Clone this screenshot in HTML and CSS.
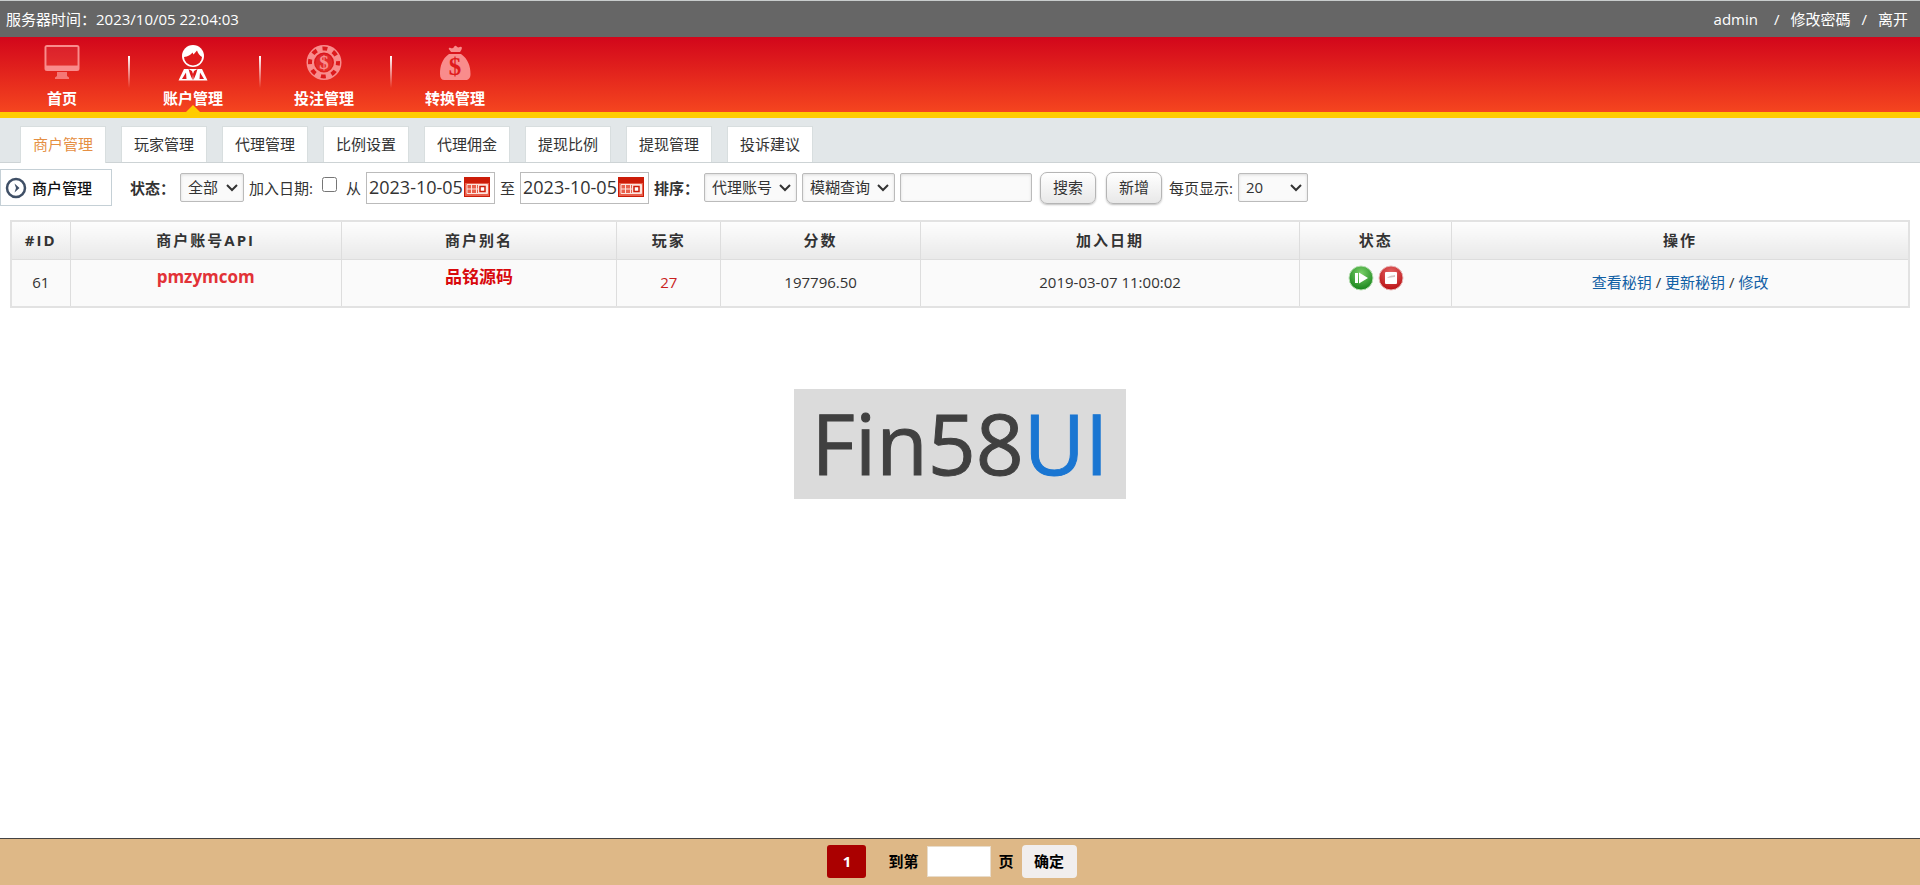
FILE: index.html
```html
<!DOCTYPE html>
<html lang="zh-CN">
<head>
  <meta charset="UTF-8">
  <meta name="viewport" content="width=device-width, initial-scale=1.0">
  <title>商户管理</title>
  <link rel="stylesheet" href="styles.css">
</head>
<body>
  <header>
    <div class="topbar">
      <div>服务器时间：<span id="server-time">2023/10/05 22:04:03</span></div>
      <div class="user-links">
        <span class="user">admin</span>
        <span>/</span>
        <a href="#">修改密碼</a>
        <span>/</span>
        <a href="#">离开</a>
      </div>
    </div>
    <nav class="main-nav">
      <a href="#">
        <svg width="36" height="36" viewBox="0 0 36 36">
          <path fill-rule="evenodd" d="M3 0h30a2.500 2.500 0 0 1 2.500 2.500v21a2.500 2.500 0 0 1-2.500 2.500H3a2.500 2.500 0 0 1-2.500-2.500v-21A2.500 2.500 0 0 1 3 0zM2.500 2v18.500h31V2z"/>
          <path d="M2.500 2h31v18.500h-31z" opacity=".15"/>
          <path d="M13 27h10v4l2 1.500V34H11v-1.500l2-1.500z" opacity=".8"/>
        </svg>
        首页
      </a>
      <a href="#" class="active">
        <svg width="36" height="36" viewBox="0 0 36 36">
          <circle cx="18" cy="11" r="11"/>
          <path class="cut" d="M9 12c4-.5 6.500-2 8.500-4.500l1 2L22 5.500c1 3 2.500 5 5 6.500a9 8.500 0 0 1-18 0z"/>
          <path d="M9 24h18l5.500 11.500h-29z"/>
          <path class="cut" d="M11 27.500l-4 6.500h4.500zM25 27.500l4 6.500h-4.500zM13.500 24l1.500 5 2.500 6 .5-6-1-3zM22.500 24l-1.500 5-2.500 6-.5-6 1-3z"/>
        </svg>
        账户管理
      </a>
      <a href="#">
        <svg width="36" height="36" viewBox="0 0 36 36">
          <path fill-rule="evenodd" d="M18 0a17.500 17.500 0 1 1 0 35 17.500 17.500 0 0 1 0-35zM18 7.500a10 10 0 1 0 0 20 10 10 0 0 0 0-20z"/>
          <circle cx="18" cy="17.500" r="8.500" opacity=".15"/>
          <circle class="notch" cx="18" cy="17.500" r="14"/>
          <text x="18" y="24" font-size="19">$</text>
        </svg>
        投注管理
      </a>
      <a href="#">
        <svg width="36" height="36" viewBox="0 0 36 36">
          <path d="M14 7c-1-2-3-3-2-4s2 1 4 0 1-3 3-2 1 2 4 1 2 3 0 5zM12 9h12c7 5 9.500 12 9.500 20 0 4-2 6-5 6h-21c-3 0-4.500-2-4.500-6C3 21 5 14 12 9z"/>
          <text class="cut" x="18" y="30" font-size="25">$</text>
        </svg>
        转换管理
      </a>
    </nav>
  </header>

  <nav class="tabs">
    <a href="#" class="active">商户管理</a>
    <a href="#">玩家管理</a>
    <a href="#">代理管理</a>
    <a href="#">比例设置</a>
    <a href="#">代理佣金</a>
    <a href="#">提现比例</a>
    <a href="#">提现管理</a>
    <a href="#">投诉建议</a>
  </nav>

  <main>
    <form class="filters">
      <div class="crumb">
        <svg width="22" height="22" viewBox="0 0 22 22">
          <circle cx="11" cy="11" r="9" fill="none" stroke="#3f4f66" stroke-width="2.500"/>
          <path d="M9.500 6.500L14.500 11l-5 4.500 1.500-4.500z" fill="#3f4f66"/>
        </svg>
        商户管理
      </div>
      <label class="strong" for="status">状态：</label>
      <select id="status" class="w-status"><option>全部</option></select>
      <label for="use-date">加入日期:</label>
      <input type="checkbox" id="use-date">
      <label for="date-from">从</label>
      <div class="date">
        <input type="text" id="date-from" value="2023-10-05">
        <svg width="26" height="20" viewBox="0 0 26 20"><use href="#calendar"/></svg>
      </div>
      <label for="date-to">至</label>
      <div class="date">
        <input type="text" id="date-to" value="2023-10-05">
        <svg width="26" height="20" viewBox="0 0 26 20">
          <g id="calendar">
            <path fill="#cc1c08" d="M0 0h26v20H0z"/>
            <path fill="#e8604c" d="M1 6h24v13H1z"/>
            <path fill="none" stroke="#fde3dc" d="M3 7.500h20.500v9H3zM3 12h11M7.500 7.500v9M12.500 7.500v9"/>
            <path fill="#fde3dc" d="M14 8h9v8h-9z"/>
            <path fill="#fff" stroke="#cc1c08" stroke-width="1.500" d="M16 9.500h5v5h-5z"/>
          </g>
        </svg>
      </div>
      <label class="strong" for="sort">排序：</label>
      <select id="sort" class="w-sort"><option>代理账号</option></select>
      <select class="w-sort" aria-label="查询方式"><option>模糊查询</option></select>
      <input type="text" class="keyword" aria-label="关键字">
      <button type="submit">搜索</button>
      <button type="button">新增</button>
      <label for="page-size">每页显示:</label>
      <select id="page-size" class="w-size"><option>20</option></select>
    </form>

    <table class="merchants">
      <colgroup>
        <col class="c-id"><col class="c-api"><col class="c-alias"><col class="c-players">
        <col class="c-score"><col class="c-date"><col class="c-status"><col>
      </colgroup>
      <thead>
        <tr>
          <th>#ID</th>
          <th>商户账号API</th>
          <th>商户别名</th>
          <th>玩家</th>
          <th>分数</th>
          <th>加入日期</th>
          <th>状态</th>
          <th>操作</th>
        </tr>
      </thead>
      <tbody>
        <tr>
          <td>61</td>
          <td class="name account">pmzymcom</td>
          <td class="name">品铭源码</td>
          <td class="players">27</td>
          <td>197796.50</td>
          <td>2019-03-07 11:00:02</td>
          <td class="state">
            <button type="button" aria-label="启用">
              <svg width="26" height="26" viewBox="0 0 26 26">
                <defs>
                  <radialGradient id="green" cx=".5" cy=".3" r=".7"><stop offset="0" stop-color="#7bd069"/><stop offset="1" stop-color="#17841b"/></radialGradient>
                  <radialGradient id="red" cx=".5" cy=".3" r=".7"><stop offset="0" stop-color="#e66a6a"/><stop offset="1" stop-color="#b90f12"/></radialGradient>
                </defs>
                <circle cx="13" cy="13" r="12" fill="url(#green)" stroke="#b9dfb4"/>
                <path fill="#fff" d="M7 8h3v10H7zM11 7.500l9 5.500-9 5.500z"/>
              </svg>
            </button>
            <button type="button" aria-label="停用">
              <svg width="26" height="26" viewBox="0 0 26 26">
                <circle cx="13" cy="13" r="12" fill="url(#red)" stroke="#e8b8b8"/>
                <rect x="7" y="7" width="12" height="12" rx="1" fill="#fff"/>
                <path fill="#d3c5c5" d="M9 13c3-3 5-2 8-3v2c-3 0-5 1-8 1z"/>
              </svg>
            </button>
          </td>
          <td class="actions"><a href="#">查看秘钥</a> / <a href="#">更新秘钥</a> / <a href="#">修改</a></td>
        </tr>
      </tbody>
    </table>

    <div class="logo">Fin58<span>UI</span></div>
  </main>

  <footer>
    <form class="pager">
      <a href="#" class="page">1</a>
      <label for="goto">到第</label>
      <input type="text" id="goto">
      <span>页</span>
      <button type="submit">确定</button>
    </form>
  </footer>
</body>
</html>
```
FILE: styles.css
```css
* {
  box-sizing: border-box;
}

body {
  margin: 0;
  min-height: 100vh;
  display: flex;
  flex-direction: column;
  font-family: "Open Sans", "Noto Sans CJK SC", sans-serif;
  font-size: 15px;
  line-height: 20px;
  color: #333;
  background: #fff;
}

a {
  color: inherit;
  text-decoration: none;
}

input,
select,
button {
  font: inherit;
  color: inherit;
}

/* top bar */
.topbar {
  display: flex;
  justify-content: space-between;
  align-items: center;
  height: 37px;
  padding: 0 12px 0 6px;
  border-top: 1px solid #c8cccc;
  background: #666;
  color: #fff;
}

.user-links {
  display: flex;
  gap: 11px;
}

.user {
  margin-right: 5px;
}

/* main navigation */
.main-nav {
  display: flex;
  height: 81px;
  border-bottom: 6px solid #fc0;
  background: linear-gradient(#d2061b, #f5451f);
}

.main-nav a {
  position: relative;
  width: 124px;
  margin-right: 7px;
  padding-top: 8px;
  display: flex;
  flex-direction: column;
  align-items: center;
  gap: 7px;
  color: #fff;
  font-weight: bold;
}

.main-nav svg {
  fill: #f98c8c;
}

.main-nav .active svg {
  fill: #fff;
}

.main-nav text {
  font-family: "Liberation Serif", serif;
  font-weight: bold;
  text-anchor: middle;
}

.main-nav .cut {
  fill: #df1a1c;
}

.main-nav .notch {
  fill: none;
  stroke: #dc1a1c;
  stroke-width: 4;
  stroke-dasharray: 5 6;
  stroke-dashoffset: 2;
}

.main-nav a:not(:last-child)::after {
  content: "";
  position: absolute;
  top: 19px;
  right: -6px;
  width: 2px;
  height: 32px;
  background: linear-gradient(#fff, rgba(255, 255, 255, 0));
}

.main-nav .active::before {
  content: "";
  position: absolute;
  bottom: 0;
  left: 55px;
  border: 7px solid transparent;
  border-top: 0;
  border-bottom-color: #fc0;
}

/* tabs */
.tabs {
  display: flex;
  align-items: flex-end;
  gap: 15px;
  height: 45px;
  padding-left: 20px;
  border-bottom: 1px solid #cdd3d5;
  background: #e2e7e9;
}

.tabs a {
  width: 86px;
  height: 36px;
  line-height: 34px;
  text-align: center;
  background: #fff;
  border: 1px solid #d8dedf;
  border-bottom: 0;
}

.tabs .active {
  margin-bottom: -1px;
  height: 37px;
  color: #e58f43;
}

/* filters */
main {
  flex: 1;
}

.filters {
  display: flex;
  align-items: center;
  gap: 5px;
  padding-top: 6px;
}

.crumb {
  display: flex;
  align-items: center;
  gap: 5px;
  width: 112px;
  height: 37px;
  margin-right: 13px;
  padding-left: 4px;
  border: 1px solid #c5d0d6;
  color: #111;
  font-weight: 500;
}

.strong {
  font-weight: bold;
}

.filters select,
.keyword {
  height: 29px;
  border: 1px solid #bbb;
  border-radius: 2px;
  background: #fafafa;
  box-shadow: inset 0 1px 3px rgba(0, 0, 0, 0.12);
}

.filters select {
  appearance: none;
  padding: 0 0 1px 7px;
  background: #fafafa url("data:image/svg+xml,%3Csvg xmlns='http://www.w3.org/2000/svg' width='12' height='8'%3E%3Cpath d='M1 1l5 5 5-5' fill='none' stroke='%23333' stroke-width='2'/%3E%3C/svg%3E") no-repeat right 5px center;
}

.w-status {
  width: 64px;
}

.w-sort {
  width: 93px;
}

.filters .w-size {
  width: 70px;
}

.keyword {
  width: 132px;
}

.filters input[type="checkbox"] {
  width: 15px;
  height: 15px;
  margin: 0 4px 6px;
}

.date {
  display: flex;
  align-items: center;
  width: 129px;
  height: 32px;
  padding: 0 4px 2px 2px;
  border: 1px solid #bbb;
}

.date input {
  flex: 1;
  min-width: 0;
  padding: 0;
  border: 0;
  font-size: 18px;
}

.date svg {
  flex: none;
}

.filters button {
  width: 56px;
  height: 32px;
  padding: 0 0 2px;
  margin: 0 2px 0 3px;
  border: 1px solid #b5b5b5;
  border-radius: 7px;
  background: linear-gradient(#fff, #e8e8e8);
  box-shadow: 0 1px 2px rgba(0, 0, 0, 0.25);
}

/* table */
.merchants {
  width: calc(100% - 20px);
  margin: 14px 10px 0;
  table-layout: fixed;
  border-collapse: collapse;
  border: 2px solid #e2e2e2;
  text-align: center;
}

.merchants th,
.merchants td {
  padding: 0;
  border: 1px solid #ddd;
}

.merchants th {
  height: 38px;
  letter-spacing: 2px;
  background: linear-gradient(#fdfdfd, #e9e9e9);
}

.merchants td {
  height: 48px;
  padding-bottom: 2px;
  background: #fafafa;
}

.c-id { width: 59px; }
.c-api { width: 14.300%; }
.c-alias { width: 14.500%; }
.c-players { width: 5.500%; }
.c-score { width: 10.500%; }
.c-date { width: 20%; }
.c-status { width: 8%; }

.merchants .name {
  padding-bottom: 12px;
  font-size: 17px;
  font-weight: bold;
  color: #d8090c;
}

.merchants .account {
  color: #e23237;
}

.merchants .players {
  color: #c9211e;
}

.merchants .state {
  padding-bottom: 6px;
}

.state button {
  padding: 0;
  border: 0;
  background: none;
  vertical-align: top;
}

.actions a {
  color: #1260a5;
}

.logo {
  width: 332px;
  height: 110px;
  margin: 81px auto 0;
  line-height: 108px;
  text-align: center;
  font-size: 84px;
  color: #404040;
  background: #dbdbdb;
  -webkit-text-stroke: 1px;
}

.logo span {
  color: #1a76d2;
}

/* pager */
footer {
  height: 47px;
  border-top: 1px solid #444;
  background: #deb887;
  color: #000;
}

.pager {
  display: flex;
  justify-content: center;
  align-items: center;
  gap: 8px;
  height: 44px;
  padding-right: 16px;
  font-weight: bold;
}

.page {
  width: 39px;
  margin-right: 14px;
  line-height: 33px;
  border-radius: 3px;
  text-align: center;
  background: #a00;
  color: #fff;
}

.pager input {
  width: 64px;
  height: 31px;
  border: 1px solid #e8dccb;
  background: #fff;
}

.pager button {
  width: 55px;
  height: 33px;
  padding: 0;
  border: 0;
  border-radius: 4px;
  background: #f1eeee;
}
```
